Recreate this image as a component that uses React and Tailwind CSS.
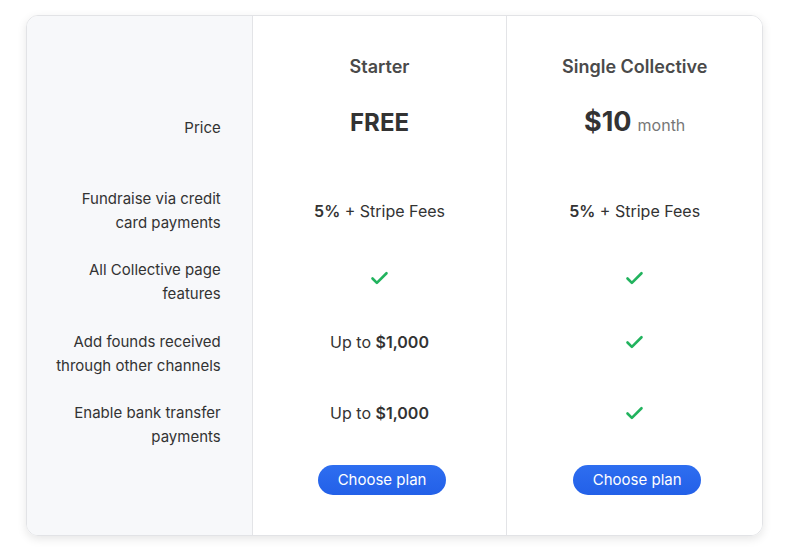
import React from "react";

const Check = () => (
  <svg width="21" height="21" viewBox="0 0 24 24" fill="none" stroke="#22b35e" strokeWidth="3" strokeLinecap="round" strokeLinejoin="round">
    <path d="M20 6 9 17l-5-5" />
  </svg>
);

const labels = [
  ["Fundraise via credit", "card payments"],
  ["All Collective page", "features"],
  ["Add founds received", "through other channels"],
  ["Enable bank transfer", "payments"],
];
const rowMt = ["mt-[44px]", "mt-[23px]", "mt-[24px]", "mt-[23px]"];
const valMt = ["mt-[13px]", "mt-[9px]", "mt-[1px]", "mt-[1px]"];

function PlanColumn({ title, price, values, last }) {
  return (
    <div className={`flex w-[255px] flex-col items-center bg-white pt-[30px] pb-[40px] ${last ? "" : "border-r border-[#e3e4e7]"}`}>
      <div className="flex h-10 items-center text-[18px] font-semibold text-[#4a4a4a]">{title}</div>
      <div className="mt-4 flex h-10 items-center pt-[1px]">{price}</div>
      {values.map((v, i) => (
        <div key={i} className={`${rowMt[i]} h-12 w-full`}>
          <div className={`${valMt[i]} flex h-6 items-center justify-center text-[16px] text-[#333]`}>{v}</div>
        </div>
      ))}
      <button className="mt-[17px] ml-[5px] h-[30px] w-[128px] rounded-full bg-gradient-to-b from-[#2e6ef0] to-[#2360e8] text-[15px] text-white">
        Choose plan
      </button>
    </div>
  );
}

export default function App() {
  const fees = (
    <span>
      <b className="font-semibold">5%</b> + Stripe Fees
    </span>
  );
  const upto = (
    <span>
      Up to <b className="font-semibold">$1,000</b>
    </span>
  );
  return (
    <div className="min-h-[558px] w-[794px] bg-white pt-[15px] pl-[26px]" style={{ fontFamily: "Inter, 'Noto Sans', sans-serif" }}>
      <div className="flex w-[737px] overflow-hidden rounded-[12px] border border-[#e2e3e6] shadow-[0_3px_10px_rgba(0,0,0,0.10)]">
        <div className="flex w-[226px] flex-col border-r border-[#e3e4e7] bg-[#f7f8fa] pt-[31px] pr-[31px] text-right text-[15px] leading-6 text-[#333]">
          <div className="h-10" />
          <div className="mt-4 flex h-10 items-end justify-end pb-[3px]">Price</div>
          {labels.map((l, i) => (
            <div key={i} className={`${rowMt[i]} h-12 whitespace-nowrap`}>
              {l[0]}
              <br />
              {l[1]}
            </div>
          ))}
        </div>
        <PlanColumn
          title="Starter"
          price={<span className="text-[24px] font-bold text-[#333]">FREE</span>}
          values={[fees, <Check />, upto, upto]}
        />
        <PlanColumn
          last
          title="Single Collective"
          price={
            <span className="flex items-baseline gap-[6px]">
              <span className="text-[27px] font-bold text-[#333]">$10</span>
              <span className="text-[16px] text-[#777]">month</span>
            </span>
          }
          values={[fees, <Check />, <Check />, <Check />]}
        />
      </div>
    </div>
  );
}
